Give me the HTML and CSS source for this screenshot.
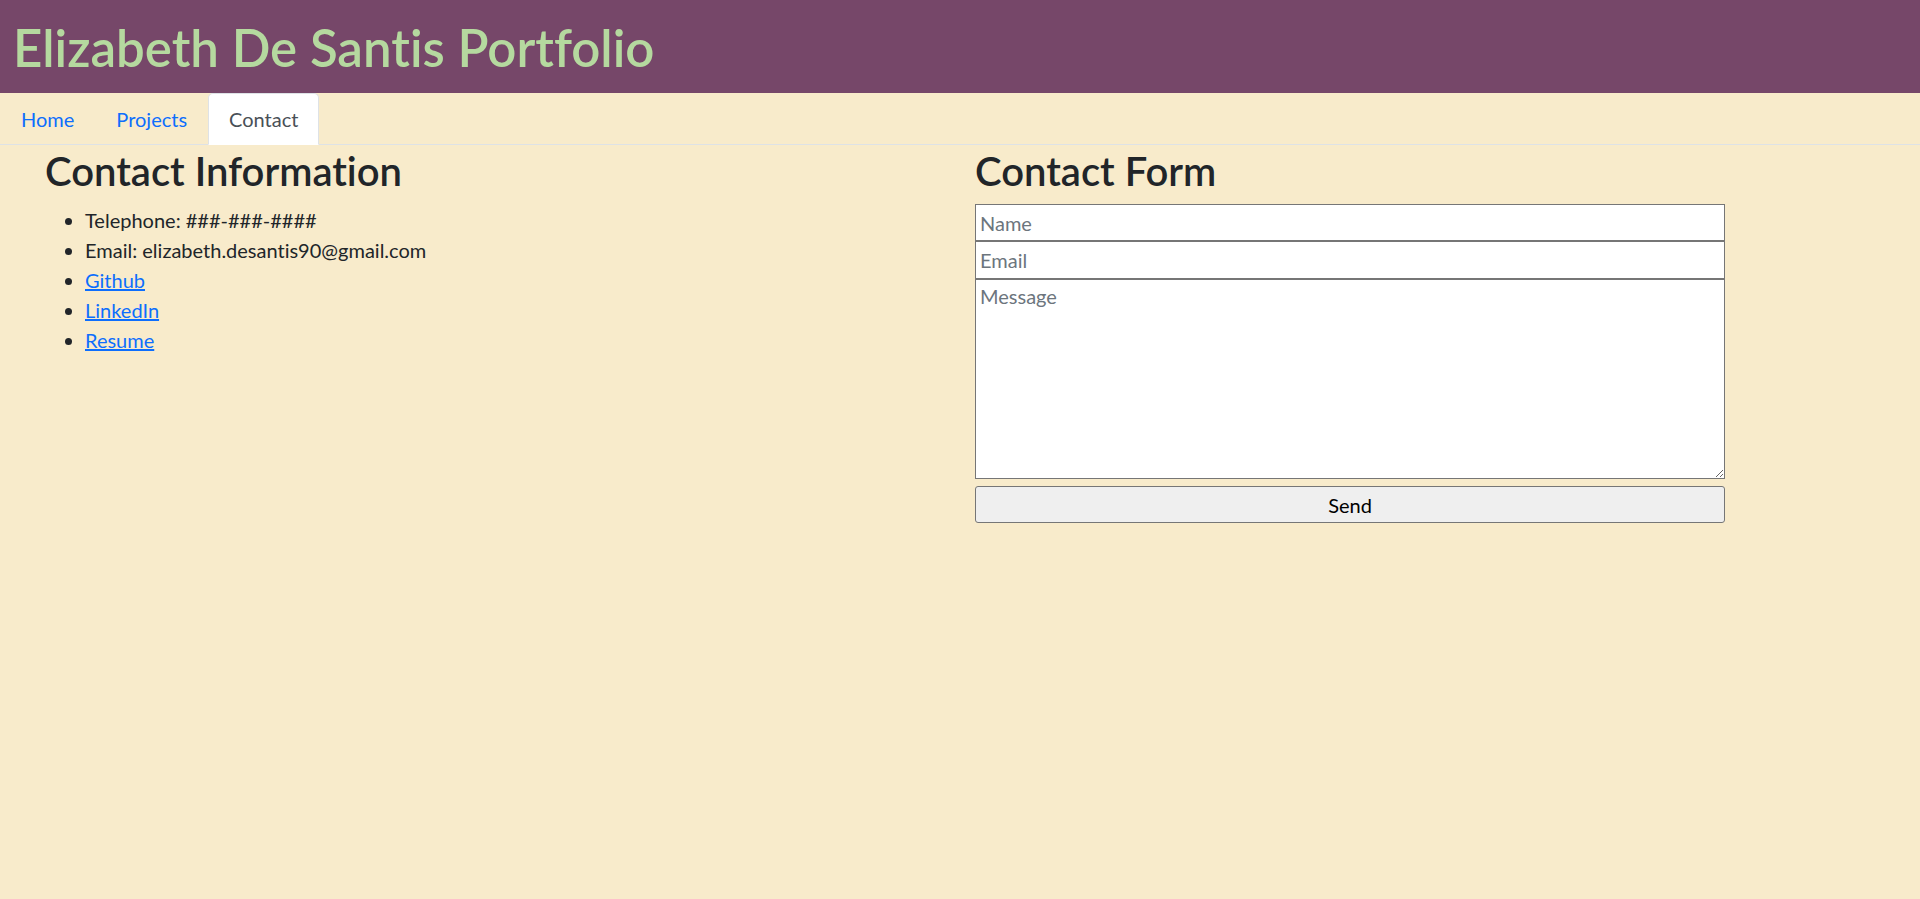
FILE: index.html
```html
<!DOCTYPE html>
<html lang="en">
<head>
<meta charset="utf-8">
<title>Elizabeth De Santis Portfolio</title>
<link rel="stylesheet" href="styles.css">
</head>
<body>
<header class="site-header">
  <h1 class="site-title">Elizabeth De Santis Portfolio</h1>
</header>
<nav class="tabs">
  <a class="tab" href="#">Home</a>
  <a class="tab" href="#">Projects</a>
  <a class="tab active" href="#">Contact</a>
</nav>
<main class="content">
  <section class="col col-info">
    <h2 class="section-title">Contact Information</h2>
    <ul class="info-list">
      <li>Telephone: ###-###-####</li>
      <li>Email: elizabeth.desantis90@gmail.com</li>
      <li><a href="#">Github</a></li>
      <li><a href="#">LinkedIn</a></li>
      <li><a href="#">Resume</a></li>
    </ul>
  </section>
  <section class="col col-form">
    <h2 class="section-title">Contact Form</h2>
    <form class="contact-form">
      <input class="field" type="text" placeholder="Name">
      <input class="field tall" type="email" placeholder="Email">
      <textarea class="field message" placeholder="Message"></textarea>
      <button class="send" type="button">Send</button>
    </form>
  </section>
</main>
</body>
</html>
```
FILE: styles.css
```css
html, body {
  margin: 0;
  padding: 0;
}
body {
  background: #f8ebcb;
  color: #212529;
  font-family: "Lato", "Open Sans", sans-serif;
  font-size: 20px;
  line-height: 30px;
  font-variant-ligatures: none;
}
.site-header {
  background: #764769;
  height: 93px;
  display: flex;
  align-items: center;
  padding-left: 13px;
  box-sizing: border-box;
}
.site-title {
  margin: 0;
  font-size: 51px;
  font-weight: 600;
  line-height: 60px;
  color: #b5d99f;
  padding-top: 2px;
}
.tabs {
  display: flex;
  border-bottom: 1px solid #dee2e6;
}
.tab {
  display: block;
  padding: 10px 20px;
  line-height: 30px;
  color: #0d6efd;
  text-decoration: none;
  border: 1px solid transparent;
  border-top-left-radius: 5px;
  border-top-right-radius: 5px;
  margin-bottom: -1px;
}
.tab.active {
  background: #fff;
  color: #495057;
  border-color: #dee2e6 #dee2e6 #fff;
}
.content {
  display: grid;
  grid-template-columns: 1fr 1fr;
  padding-top: 1px;
}
.col-info {
  padding-left: 45px;
}
.col-form {
  padding-left: 15px;
}
.section-title {
  margin: 0 0 10px;
  font-size: 40px;
  line-height: 48px;
  font-weight: 600;
  padding-top: 1px;
  margin-bottom: 9px;
}
.info-list {
  margin: 0;
  padding-left: 40px;
}
.info-list li {
  padding-top: 1px;
  margin-bottom: -1px;
}
.info-list a {
  color: #0d6efd;
  text-decoration: underline;
}
.contact-form {
  width: 750px;
}
.field {
  display: block;
  width: 100%;
  box-sizing: border-box;
  height: 37px;
  margin: 0;
  padding: 1px 4px;
  border: 1px solid #767676;
  background: #fff;
  font-family: inherit;
  font-size: 20px;
  line-height: 30px;
  color: #212529;
}
.field.tall {
  height: 38px;
}
.field::placeholder {
  color: #6c757d;
}
.message {
  height: 200px;
  resize: vertical;
}
.send {
  display: block;
  width: 100%;
  height: 37px;
  margin-top: 7px;
  background: #efefef;
  border: 1px solid #767676;
  border-radius: 3px;
  font-family: inherit;
  font-size: 20px;
  line-height: 30px;
  color: #000;
  padding: 0;
}
```
